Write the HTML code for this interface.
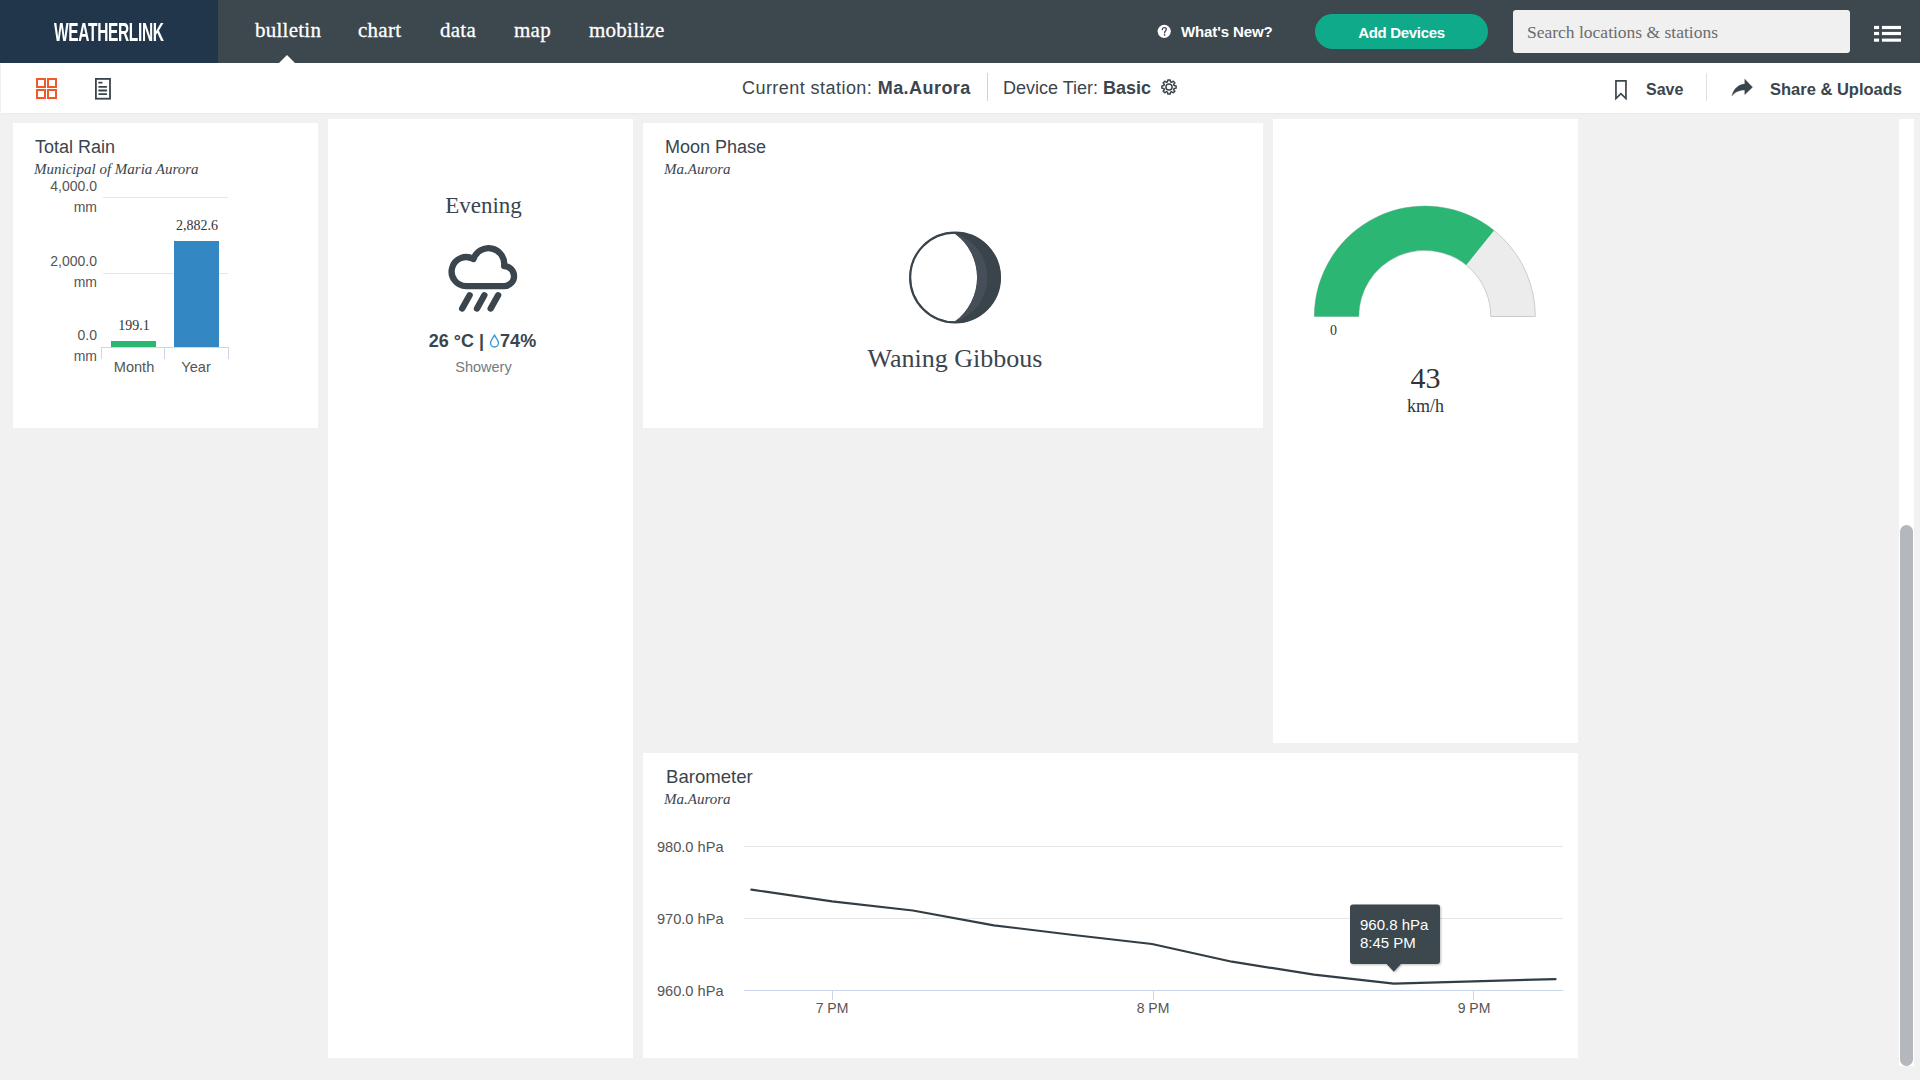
<!DOCTYPE html>
<html><head><meta charset="utf-8">
<style>
*{margin:0;padding:0;box-sizing:border-box}
html,body{width:1920px;height:1080px;overflow:hidden;background:#f1f1f1;font-family:"Liberation Sans",sans-serif;color:#3b454d}
.a{position:absolute;white-space:nowrap}
.serif{font-family:"Liberation Serif",serif}
#hdr{position:absolute;left:0;top:0;width:1920px;height:63px;background:#3c474e}
#logo{position:absolute;left:0;top:0;width:218px;height:63px;background:#21364a}
.nav{position:absolute;top:17px;font-family:"Liberation Serif",serif;font-size:21px;color:#fff;line-height:26px;letter-spacing:0.25px;-webkit-text-stroke:0.3px #fff}
#tb{position:absolute;left:1px;top:63px;width:1919px;height:50px;background:#fff;box-shadow:0 1px 2px rgba(0,0,0,0.035)}
.panel{position:absolute;background:#fff}
.title{position:absolute;font-size:18px;line-height:22px;color:#3b454d}
.sub{position:absolute;font-family:"Liberation Serif",serif;font-style:italic;font-size:15px;line-height:18px;color:#3b454d}
</style></head>
<body>
<div id="hdr"></div>
<div id="logo"></div>
<div class="a" style="left:54px;top:18px;font-size:25.5px;font-weight:bold;color:#fff;transform:scaleX(0.606);transform-origin:0 0;letter-spacing:-0.5px;line-height:28px">WEATHERLINK</div>
<div class="nav a" style="left:255px">bulletin</div>
<div class="nav a" style="left:358px">chart</div>
<div class="nav a" style="left:440px">data</div>
<div class="nav a" style="left:514px">map</div>
<div class="nav a" style="left:589px">mobilize</div>
<!-- pointer -->
<div class="a" style="left:279px;top:55px;width:0;height:0;border-left:8px solid transparent;border-right:8px solid transparent;border-bottom:8px solid #fff"></div>

<!-- what's new -->
<svg class="a" style="left:1156px;top:23px" width="17" height="17" viewBox="0 0 17 17"><circle cx="8.2" cy="8.3" r="6.6" fill="#fff"/><path d="M6.3 6.6C6.4 5.3 7.2 4.7 8.3 4.7C9.5 4.7 10.3 5.4 10.3 6.4C10.3 7.7 8.6 7.9 8.6 9.8" fill="none" stroke="#3c474e" stroke-width="1.3" stroke-linecap="round"/><circle cx="8.6" cy="11.8" r="0.85" fill="#3c474e"/></svg>
<div class="a" style="left:1181px;top:22px;font-size:15px;font-weight:bold;color:#fff;line-height:20px;letter-spacing:-0.1px">What's New?</div>
<div class="a" style="left:1315px;top:14px;width:173px;height:35px;border-radius:18px;background:#0eaa8a;color:#fff;font-size:15px;font-weight:bold;text-align:center;line-height:37px;letter-spacing:-0.3px;padding-left:0px">Add Devices</div>
<div class="a" style="left:1513px;top:10px;width:337px;height:43px;border-radius:3px;background:#f0f0f0"></div>
<div class="a serif" style="left:1527px;top:21px;font-size:17.5px;color:#6b6b6b;line-height:22px">Search locations &amp; stations</div>
<!-- hamburger -->
<svg class="a" style="left:1874px;top:25px" width="28" height="18" viewBox="0 0 28 18">
<rect x="0" y="0.9" width="5.1" height="3.2" fill="#fff"/><rect x="7.9" y="0.9" width="19.1" height="3.2" fill="#fff"/>
<rect x="0" y="6.9" width="5.1" height="3.2" fill="#fff"/><rect x="7.9" y="6.9" width="19.1" height="3.2" fill="#fff"/>
<rect x="0" y="13.6" width="5.1" height="3.1" fill="#fff"/><rect x="7.9" y="13.6" width="19.1" height="3.1" fill="#fff"/>
</svg>

<!-- toolbar -->
<div id="tb"></div>
<svg class="a" style="left:35px;top:77px" width="24" height="24" viewBox="0 0 24 24">
<g fill="none" stroke="#f05a28" stroke-width="2">
<rect x="2" y="2" width="8" height="8"/><rect x="13" y="2" width="8" height="8"/>
<rect x="2" y="13" width="8" height="8"/><rect x="13" y="13" width="8" height="8"/>
</g></svg>
<svg class="a" style="left:94px;top:77px" width="20" height="24" viewBox="0 0 20 24">
<rect x="1.9" y="1.9" width="14.1" height="19.8" fill="none" stroke="#3a444b" stroke-width="1.8"/>
<g stroke="#3a444b" stroke-width="1.8" stroke-linecap="round"><line x1="5.1" y1="5.7" x2="7.7" y2="5.7"/><line x1="5.1" y1="9.85" x2="12.3" y2="9.85"/><line x1="5.1" y1="13.5" x2="12.3" y2="13.5"/><line x1="5.1" y1="17.1" x2="12.3" y2="17.1"/></g>
</svg>

<div class="a" style="left:742px;top:77px;font-size:18px;line-height:22px;letter-spacing:0.45px">Current station: <b>Ma.Aurora</b></div>
<div class="a" style="left:987px;top:73px;width:1px;height:28px;background:#cfd3d6"></div>
<div class="a" style="left:1003px;top:77px;font-size:18px;line-height:22px">Device Tier: <b>Basic</b></div>
<svg class="a" style="left:1157px;top:75px" width="24" height="24" viewBox="0 0 24 24"><path fill="none" stroke="#3a444b" stroke-width="1.5" stroke-linejoin="round" d="M10.45 6.93 L10.87 4.89 L13.13 4.89 L13.55 6.93 L14.49 7.32 L16.23 6.18 L17.82 7.77 L16.68 9.51 L17.07 10.45 L19.11 10.87 L19.11 13.13 L17.07 13.55 L16.68 14.49 L17.82 16.23 L16.23 17.82 L14.49 16.68 L13.55 17.07 L13.13 19.11 L10.87 19.11 L10.45 17.07 L9.51 16.68 L7.77 17.82 L6.18 16.23 L7.32 14.49 L6.93 13.55 L4.89 13.13 L4.89 10.87 L6.93 10.45 L7.32 9.51 L6.18 7.77 L7.77 6.18 L9.51 7.32Z"/><circle cx="12" cy="12" r="3.1" fill="none" stroke="#3a444b" stroke-width="1.5"/></svg>

<svg class="a" style="left:1614px;top:79px" width="15" height="22" viewBox="0 0 15 22"><path d="M1.95 1.85H11.95V19.6L6.95 14.7L1.95 19.6Z" fill="none" stroke="#3c464d" stroke-width="1.7"/></svg>
<div class="a" style="left:1646px;top:79px;font-size:16px;font-weight:bold;line-height:22px">Save</div>
<div class="a" style="left:1706px;top:73px;width:1px;height:28px;background:#dfe2e4"></div>
<svg class="a" style="left:1725px;top:74px" width="35" height="28" viewBox="0 0 35 28"><path d="M27.5 13.2L19.8 5.2V10.1C13.5 10.4 8.6 15 7 21.8C10 18.2 14 16 19.8 16.1V20.5Z" fill="#3a444b" stroke="#3a444b" stroke-width="0.4" stroke-linejoin="round"/></svg>
<div class="a" style="left:1770px;top:78px;font-size:16.5px;font-weight:bold;line-height:22px">Share &amp; Uploads</div>

<!-- panels -->
<div class="panel" style="left:13px;top:123px;width:305px;height:305px"></div>
<div class="panel" style="left:328px;top:119px;width:305px;height:939px"></div>
<div class="panel" style="left:643px;top:123px;width:620px;height:305px"></div>
<div class="panel" style="left:1273px;top:119px;width:305px;height:624px"></div>
<div class="panel" style="left:643px;top:753px;width:935px;height:305px"></div>


<!-- Total Rain -->
<div class="title a" style="left:35px;top:136px">Total Rain</div>
<div class="sub a" style="left:34px;top:160px">Municipal of Maria Aurora</div>
<svg class="a" style="left:13px;top:123px" width="305" height="305" viewBox="13 123 305 305">
<line x1="103" y1="197.5" x2="228" y2="197.5" stroke="#e6e6e6" stroke-width="1"/>
<line x1="103" y1="273.5" x2="228" y2="273.5" stroke="#e6e6e6" stroke-width="1"/>
<rect x="111" y="341" width="45" height="6" fill="#2bb673"/>
<rect x="174" y="241" width="45" height="106" fill="#3387c3"/>
<line x1="102" y1="347.5" x2="229" y2="347.5" stroke="#ccd6eb" stroke-width="1"/>
<line x1="101.5" y1="347" x2="101.5" y2="359" stroke="#ccd6eb" stroke-width="1"/>
<line x1="164.5" y1="347" x2="164.5" y2="359" stroke="#ccd6eb" stroke-width="1"/>
<line x1="228.5" y1="347" x2="228.5" y2="359" stroke="#ccd6eb" stroke-width="1"/>
</svg>
<div class="a" style="left:30px;top:176px;width:67px;text-align:right;font-size:14px;line-height:21px;color:#555">4,000.0<br>mm</div>
<div class="a" style="left:30px;top:251px;width:67px;text-align:right;font-size:14px;line-height:21px;color:#555">2,000.0<br>mm</div>
<div class="a" style="left:30px;top:325px;width:67px;text-align:right;font-size:14px;line-height:21px;color:#555">0.0<br>mm</div>
<div class="a serif" style="left:103px;top:317px;width:62px;text-align:center;font-size:14px;line-height:18px;color:#333">199.1</div>
<div class="a serif" style="left:166px;top:217px;width:62px;text-align:center;font-size:14px;line-height:18px;color:#333">2,882.6</div>
<div class="a" style="left:103px;top:358px;width:62px;text-align:center;font-size:14.6px;line-height:18px;color:#555">Month</div>
<div class="a" style="left:165px;top:358px;width:62px;text-align:center;font-size:14.6px;line-height:18px;color:#555">Year</div>

<!-- Evening -->
<div class="a serif" style="left:331px;top:193px;width:305px;text-align:center;font-size:23px;line-height:26px;color:#3b454d">Evening</div>
<svg class="a" style="left:440px;top:238px" width="85" height="80" viewBox="0 0 85 80">
<path d="M26.15 48.1H64.5A10 10 0 0 0 64.09 28.11A15.75 15.75 0 0 0 33.5 21.1A14.5 14.5 0 1 0 26.15 48.1Z" fill="none" stroke="#3b454d" stroke-width="6.3" stroke-linejoin="round"/>
<g stroke="#3b454d" stroke-width="6.4" stroke-linecap="round"><line x1="29.6" y1="57.3" x2="22.2" y2="70.5"/><line x1="44.3" y1="57.3" x2="37" y2="70.5"/><line x1="58.1" y1="57.3" x2="50.7" y2="70.5"/></g>
</svg>
<div class="a" style="left:330px;top:330px;width:305px;text-align:center;font-size:18px;font-weight:bold;line-height:22px;color:#3b454d">26 °C | <svg width="11" height="14" viewBox="0 0 11 14" style="vertical-align:-1px"><path d="M5.5 1.2C4 4 1.5 6.5 1.5 9a4 4 0 0 0 8 0C9.5 6.5 7 4 5.5 1.2z" fill="none" stroke="#3d9ad6" stroke-width="1.4"/></svg>74%</div>
<div class="a" style="left:331px;top:358px;width:305px;text-align:center;font-size:14.5px;line-height:18px;color:#747b81">Showery</div>

<!-- Moon -->
<div class="title a" style="left:665px;top:136px">Moon Phase</div>
<div class="sub a" style="left:664px;top:160px">Ma.Aurora</div>
<svg class="a" style="left:900px;top:224px" width="110" height="106" viewBox="0 0 110 106">
<circle cx="55.05" cy="53.5" r="45.6" fill="#3a444b"/>
<path d="M54.7 9.4A44.1 44.1 0 0 0 54.7 97.6A54.6 54.6 0 0 0 54.7 9.4Z" fill="#fff"/>
<path d="M54.7 9.4A54.6 54.6 0 0 1 54.7 97.6A46.1 46.1 0 0 0 54.7 9.4Z" fill="#464f57"/>
<circle cx="55.05" cy="53.5" r="44.9" fill="none" stroke="#3a444b" stroke-width="2.2"/>
</svg>
<div class="a serif" style="left:645px;top:344px;width:620px;text-align:center;font-size:26px;line-height:30px;color:#3b454d">Waning Gibbous</div>

<!-- Gauge -->
<svg class="a" style="left:1273px;top:119px" width="305" height="305" viewBox="1273 119 305 305">
<path d="M1314.3 316.5 A110.5 110.5 0 0 1 1535.3 316.5 L1490.8 316.5 A66 66 0 0 0 1358.8 316.5 Z" fill="#ececec" stroke="#cccccc" stroke-width="1"/>
<path d="M1314.3 316.5 A110.5 110.5 0 0 1 1494.0 230.4 L1466.3 264.9 A66 66 0 0 0 1358.8 316.5 Z" fill="#2bb673"/>
</svg>
<div class="a serif" style="left:1330px;top:322px;font-size:14px;line-height:18px;color:#333">0</div>
<div class="a serif" style="left:1273px;top:361px;width:305px;text-align:center;font-size:30px;line-height:34px;color:#333">43</div>
<div class="a serif" style="left:1273px;top:396px;width:305px;text-align:center;font-size:18px;line-height:20px;color:#333">km/h</div>

<!-- Barometer -->
<div class="title a" style="left:666px;top:766px;font-size:18.6px">Barometer</div>
<div class="sub a" style="left:664px;top:790px">Ma.Aurora</div>
<svg class="a" style="left:643px;top:753px" width="935" height="305" viewBox="643 753 935 305">
<line x1="744" y1="846.5" x2="1563" y2="846.5" stroke="#e6e6e6" stroke-width="1"/>
<line x1="744" y1="918.5" x2="1563" y2="918.5" stroke="#e6e6e6" stroke-width="1"/>
<line x1="744" y1="990.5" x2="1563" y2="990.5" stroke="#ccd6eb" stroke-width="1"/>
<line x1="832.5" y1="990" x2="832.5" y2="1000" stroke="#ccd6eb" stroke-width="1"/>
<line x1="1153.5" y1="990" x2="1153.5" y2="1000" stroke="#ccd6eb" stroke-width="1"/>
<line x1="1473.5" y1="990" x2="1473.5" y2="1000" stroke="#ccd6eb" stroke-width="1"/>
<polyline points="751.4,889.7 832,901.3 912.8,910.5 993.8,925.3 1073.5,935 1152,944 1232,961.7 1314,974.7 1393.8,983.6 1473.3,981.3 1555.5,979.1" fill="none" stroke="#333d44" stroke-width="2.2" stroke-linejoin="round" stroke-linecap="round"/>
</svg>
<div class="a" style="left:648.5px;top:838px;width:75px;text-align:right;font-size:14.6px;line-height:18px;color:#555">980.0 hPa</div>
<div class="a" style="left:648.5px;top:910px;width:75px;text-align:right;font-size:14.6px;line-height:18px;color:#555">970.0 hPa</div>
<div class="a" style="left:648.5px;top:982px;width:75px;text-align:right;font-size:14.6px;line-height:18px;color:#555">960.0 hPa</div>
<div class="a" style="left:792px;top:999px;width:80px;text-align:center;font-size:14px;line-height:18px;color:#555">7 PM</div>
<div class="a" style="left:1113px;top:999px;width:80px;text-align:center;font-size:14px;line-height:18px;color:#555">8 PM</div>
<div class="a" style="left:1434px;top:999px;width:80px;text-align:center;font-size:14px;line-height:18px;color:#555">9 PM</div>
<!-- tooltip -->
<svg class="a" style="left:1345px;top:900px;filter:drop-shadow(1px 1px 1.2px rgba(0,0,0,0.25))" width="100" height="80" viewBox="1345 900 100 80">
<path d="M1353 904.5 H1437 A3 3 0 0 1 1440 907.5 V961 A3 3 0 0 1 1437 964 H1401 L1393.8 971.7 L1386.5 964 H1353 A3 3 0 0 1 1350 961 V907.5 A3 3 0 0 1 1353 904.5Z" fill="#3c474e"/>
</svg>
<div class="a" style="left:1360px;top:915.5px;font-size:15px;line-height:18px;color:#fff">960.8 hPa<br>8:45 PM</div>

<!-- scrollbar -->
<div class="a" style="left:1899px;top:119px;width:15px;height:947px;background:#fff"></div>
<div class="a" style="left:1900px;top:525px;width:13px;height:541px;border-radius:7px;background:#b4b7bb"></div>

</body></html>
